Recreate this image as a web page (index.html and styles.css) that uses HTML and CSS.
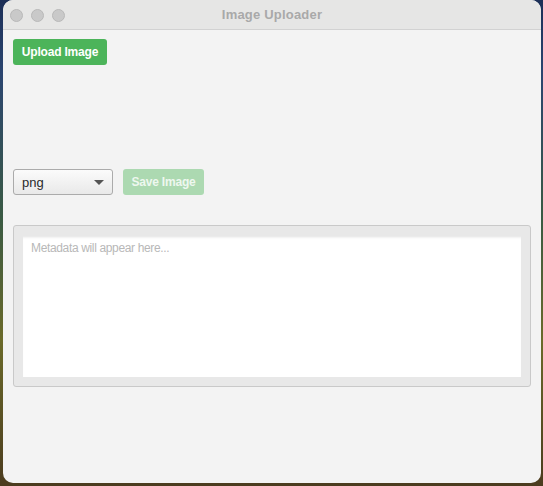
FILE: index.html
```html
<!DOCTYPE html>
<html>
<head>
<meta charset="utf-8">
<link rel="stylesheet" href="styles.css">
</head>
<body>
<div class="desktop">
  <div class="window">
    <div class="titlebar">
      <div class="lights">
        <span class="light"></span><span class="light"></span><span class="light"></span>
      </div>
      <div class="title">Image Uploader</div>
    </div>
    <div class="content">
      <button class="btn btn-upload">Upload Image</button>
      <div class="controls">
        <div class="select">
          <span class="select-label">png</span>
          <svg class="caret" width="10" height="5" viewBox="0 0 10 5"><path d="M0 0 L10 0 L5 5 Z" fill="#555"/></svg>
        </div>
        <button class="btn btn-save" disabled>Save Image</button>
      </div>
      <div class="panel">
        <div class="textarea">
          <span class="placeholder">Metadata will appear here...</span>
        </div>
      </div>
    </div>
  </div>
</div>
</body>
</html>
```
FILE: styles.css
```css
html, body {
  margin: 0;
  padding: 0;
}
body {
  width: 543px;
  height: 486px;
  overflow: hidden;
  font-family: "Liberation Sans", Arial, sans-serif;
}
.desktop {
  width: 543px;
  height: 486px;
  background: linear-gradient(180deg, #1c2f57 0%, #2b4570 15%, #3a5a43 45%, #6b6a2a 70%, #4b3b1e 100%);
  padding-left: 3px;
  box-sizing: border-box;
}
.window {
  width: 538px;
  height: 483px;
  background: #f3f3f3;
  border-radius: 10px;
  overflow: hidden;
  display: flex;
  flex-direction: column;
}
.titlebar {
  height: 29px;
  background: #e6e6e5;
  border-bottom: 1px solid #d2d2d2;
  position: relative;
  display: flex;
  align-items: center;
  justify-content: center;
  flex: none;
}
.lights {
  position: absolute;
  left: 7px;
  top: 9px;
  display: flex;
  gap: 8px;
}
.light {
  width: 11px;
  height: 11px;
  border-radius: 50%;
  background: #c9c9c9;
  border: 0.5px solid #b8b8b8;
}
.title {
  font-weight: bold;
  font-size: 13px;
  color: #a9a9a9;
  letter-spacing: 0.2px;
}
.content {
  padding: 9px 10px 0 10px;
  display: flex;
  flex-direction: column;
  align-items: flex-start;
}
.btn {
  height: 26px;
  border: none;
  border-radius: 3px;
  color: #fff;
  font-family: "Liberation Sans", Arial, sans-serif;
  font-weight: bold;
  font-size: 12px;
  padding: 0;
  letter-spacing: -0.2px;
}
.btn-upload {
  width: 94px;
  background: #4cb45a;
}
.controls {
  margin-top: 104px;
  display: flex;
  gap: 10px;
  align-items: center;
}
.select {
  width: 100px;
  height: 26px;
  box-sizing: border-box;
  border: 1px solid #ababab;
  border-radius: 3px;
  background: linear-gradient(180deg, #fbfbfb, #e9e9e9);
  display: flex;
  align-items: center;
  justify-content: space-between;
  padding: 0 8px 0 8px;
}
.select-label {
  font-size: 13px;
  color: #2a2a2a;
}
.caret {
  display: block;
}
.btn-save {
  width: 81px;
  background: #acd9b1;
  color: #eef7ef;
}
.panel {
  margin-top: 30px;
  width: 518px;
  height: 162px;
  box-sizing: border-box;
  border: 1px solid #c9c9c9;
  border-radius: 3px;
  background: #e8e8e8;
  padding: 10px 9px 9px 9px;
}
.textarea {
  width: 100%;
  height: 100%;
  background: #fff;
  box-shadow: inset 0 3px 3px -2px rgba(0,0,0,0.12);
  padding: 2px 8px;
  box-sizing: border-box;
}
.placeholder {
  font-family: "Liberation Sans", Arial, sans-serif;
  font-size: 12px;
  color: #b8b8b8;
  letter-spacing: -0.35px;
}
```
